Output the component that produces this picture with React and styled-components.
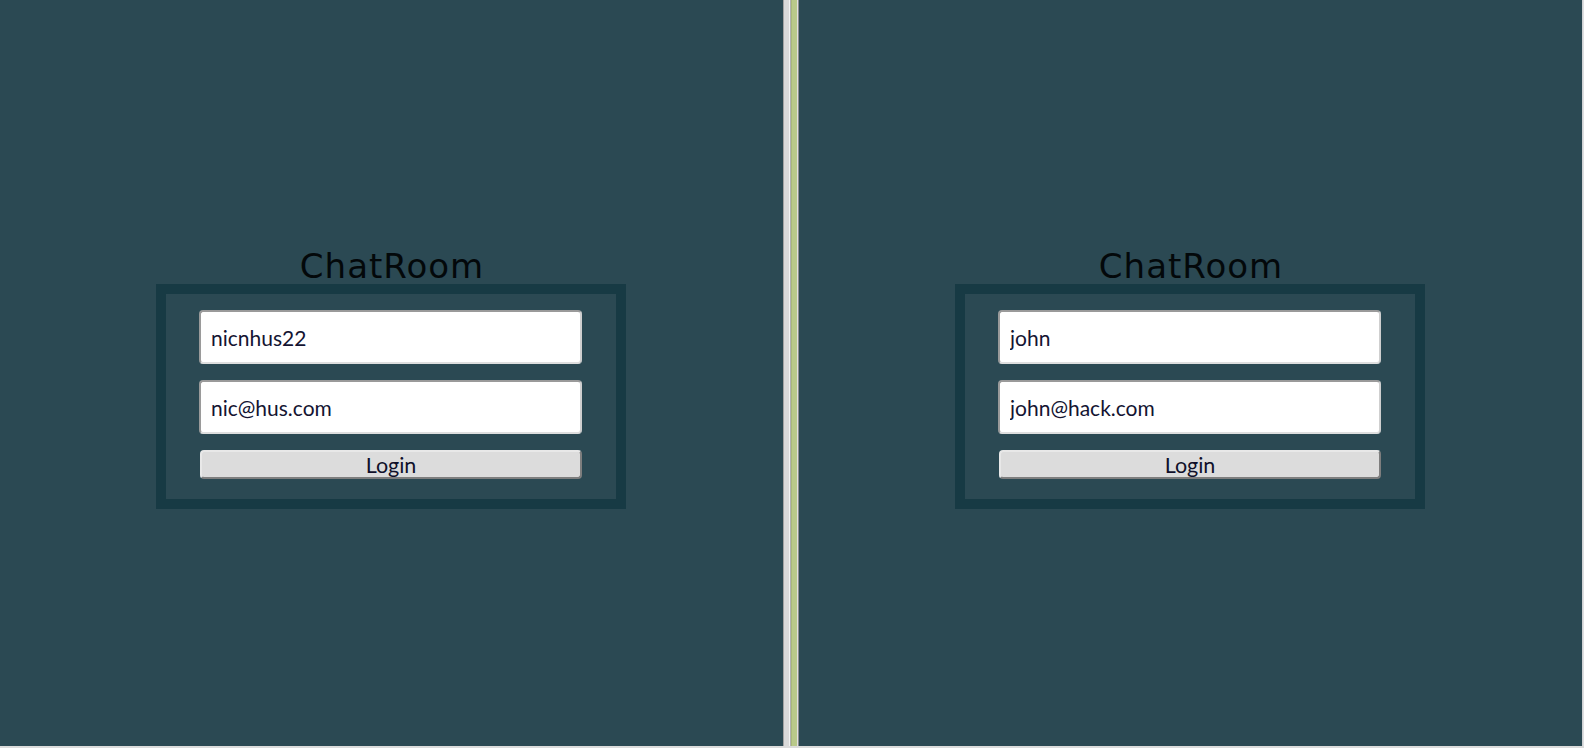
import React from "react";
import styled, { createGlobalStyle } from "styled-components";

const Global = createGlobalStyle`
  html, body { margin: 0; padding: 0; background: #d6d6d6; overflow: hidden; }
  * { box-sizing: border-box; }
`;

const Frame = styled.div`
  width: 1584px;
  height: 748px;
  display: flex;
  flex-direction: column;
`;

const Main = styled.div`
  display: flex;
  height: 746px;
`;

const BottomEdge = styled.div`
  height: 2px;
  background: #dcdcdc;
`;

const RightEdge = styled.div`
  width: 2px;
  background: linear-gradient(to right, #c8ccd0, #e6e6e6);
`;

const Pane = styled.section`
  width: 783px;
  height: 100%;
  background: #2b4953;
  display: flex;
  flex-direction: column;
  align-items: center;
  padding-top: 248px;
`;

const Divider = styled.div`
  width: 16px;
  background: linear-gradient(
    to right,
    #a2a2a2 0 1px,
    #d9d9d9 1px 6px,
    #f2f2f2 6px 7px,
    #b2b2b2 7px 8px,
    #a9b97a 8px 9px,
    #b9c98a 9px 14px,
    #e2e2e2 14px 15px,
    #8e8e8e 15px 16px
  );
`;

const Title = styled.h1`
  margin: 0 0 0 1px;
  height: 36px;
  line-height: 36px;
  font-family: "DejaVu Sans", sans-serif;
  font-weight: normal;
  font-size: 34px;
  letter-spacing: 1px;
  color: #03080a;
`;

const Box = styled.form`
  width: 470px;
  margin-right: 1px;
  border: 10px solid #173a44;
  padding: 16px 34px 20px 33px;
  display: flex;
  flex-direction: column;
  gap: 16px;
`;

const Field = styled.input`
  width: 383px;
  height: 54px;
  margin: 0;
  padding: 0 10px;
  background: #ffffff;
  border: 2px solid #9a9a9a;
  border-right-color: #cfcfcf;
  border-bottom-color: #dedede;
  border-radius: 4px;
  font-family: Lato, "Open Sans", sans-serif;
  font-size: 21px;
  color: #141432;
  outline: none;
`;

const Button = styled.button`
  width: 382px;
  height: 29px;
  margin: 0 0 0 1px;
  padding: 0;
  background: #dcdcdc;
  border: 2px solid #e8e8e8;
  border-right-color: #7e7e7e;
  border-bottom-color: #7e7e7e;
  border-radius: 4px;
  font-family: Lato, "Open Sans", sans-serif;
  font-size: 21.5px;
  line-height: 24px;
  color: #10102a;
  cursor: pointer;
`;

function LoginPanel({ name, email }) {
  return (
    <Pane>
      <Title>ChatRoom</Title>
      <Box onSubmit={(e) => e.preventDefault()}>
        <Field type="text" defaultValue={name} readOnly />
        <Field type="text" defaultValue={email} readOnly />
        <Button type="submit">Login</Button>
      </Box>
    </Pane>
  );
}

export default function App() {
  return (
    <>
      <Global />
      <Frame>
        <Main>
          <LoginPanel name="nicnhus22" email="nic@hus.com" />
          <Divider />
          <LoginPanel name="john" email="john@hack.com" />
          <RightEdge />
        </Main>
        <BottomEdge />
      </Frame>
    </>
  );
}
